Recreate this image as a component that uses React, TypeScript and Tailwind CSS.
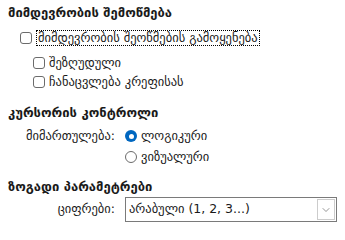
import { ChevronDown } from "lucide-react";

function Box() {
  return <span className="inline-block h-3 w-3 shrink-0 rounded-[3px] border border-[#6b6b6b] bg-white" />;
}

function Radio({ checked }: { checked?: boolean }) {
  return checked ? (
    <span className="flex h-3 w-3 shrink-0 items-center justify-center rounded-full bg-[#0067c0]">
      <span className="h-[5px] w-[5px] rounded-full bg-white" />
    </span>
  ) : (
    <span className="inline-block h-3 w-3 shrink-0 rounded-full border border-[#6b6b6b] bg-white" />
  );
}

export default function App() {
  return (
    <div
      className="h-[227px] w-[345px] overflow-hidden bg-white text-[12.5px] text-[#1a1a1a]"
      style={{ fontFamily: '"DejaVu Sans", "Noto Sans", sans-serif' }}
    >
      {/* სექცია 1 */}
      <div className="mt-1 flex h-[18px] items-center pl-2 text-[13px] font-bold">მიმდევრობის შემოწმება</div>
      <div className="mt-2 flex h-4 items-center gap-1 pl-5">
        <Box />
        <span className="border border-dotted border-black px-[1px] leading-[14px]">
          მიმდევრობის შეოწმების გამოყენება
        </span>
      </div>
      <div className="mt-[9px] flex h-4 items-center gap-1 pl-[33px]">
        <Box />
        <span>შეზღუდული</span>
      </div>
      <div className="mt-[3px] flex h-4 items-center gap-1 pl-[33px]">
        <Box />
        <span>ჩანაცვლება კრეფისას</span>
      </div>

      {/* სექცია 2 */}
      <div className="mt-[14px] flex h-[18px] items-center pl-2 text-[13px] font-bold">კურსორის კონტროლი</div>
      <div className="mt-[6px] flex">
        <div className="flex h-4 w-[117px] items-center justify-end pr-[2px]">მიმართულება:</div>
        <div className="ml-2 flex flex-col gap-[5px]">
          <div className="flex h-4 items-center gap-1">
            <Radio checked />
            <span>ლოგიკური</span>
          </div>
          <div className="flex h-4 items-center gap-1">
            <Radio />
            <span>ვიზუალური</span>
          </div>
        </div>
      </div>

      {/* სექცია 3 */}
      <div className="mt-[13px] flex h-[18px] items-center pl-2 text-[13px] font-bold">ზოგადი პარამეტრები</div>
      <div className="mt-[1px] flex items-center">
        <div className="w-[117px] pr-[2px] text-right">ციფრები:</div>
        <div className="ml-2 flex h-[25px] w-[212px] items-center border border-[#7a7a7a] bg-white">
          <span className="flex-1 pl-[3px]">არაბული (1, 2, 3...)</span>
          <span className="mr-px flex h-[21px] w-[18px] items-center justify-center border border-[#cccccc] bg-white">
            <ChevronDown className="h-3 w-3 text-[#555]" strokeWidth={1.25} />
          </span>
        </div>
      </div>
    </div>
  );
}
